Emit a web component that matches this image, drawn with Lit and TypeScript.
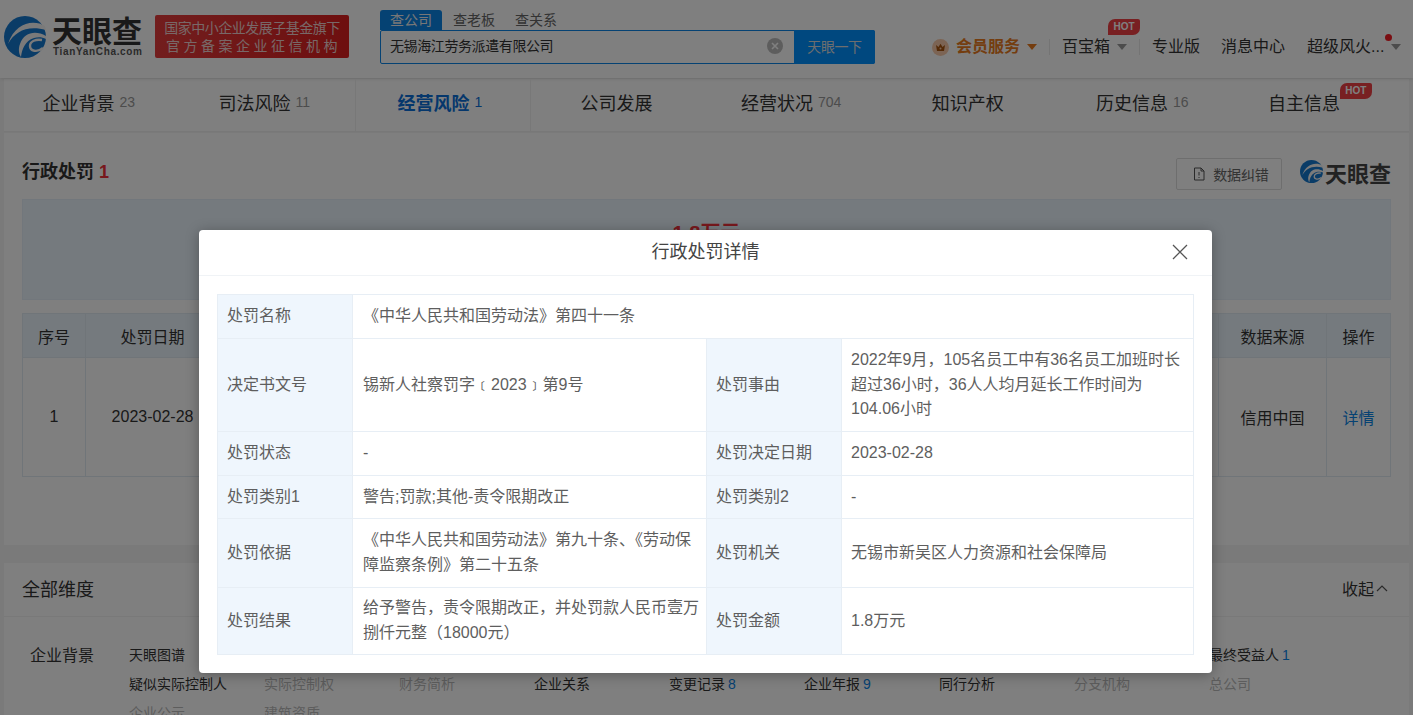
import { LitElement, html, css, svg } from 'lit'
import { customElement } from 'lit/decorators.js'

const logoMark = svg`
  <circle cx="21" cy="21" r="21" fill="#1478cf"></circle>
  <path d="M41 10C30 3 11 6 4 28C11 15 24 9 42 14Z" fill="#f4f4f4"></path>
  <path d="M42 20C32 14 20 16 16 28C14 33 15 38 17 41C18 33 21 25 30 22C34 21 38 21 42 23Z" fill="#f4f4f4"></path>
  <path d="M38 24C32 23 26 25 26 30C26 35 33 37 39 32" fill="none" stroke="#f4f4f4" stroke-width="2.4"></path>
`

const arrow = (color: string) => html`<span class="arrow" style="border-top-color:${color}"></span>`

interface Tab { label: string; count?: string; active?: boolean; hot?: boolean }
const tabs: Tab[] = [
  { label: '企业背景', count: '23' },
  { label: '司法风险', count: '11' },
  { label: '经营风险', count: '1', active: true },
  { label: '公司发展' },
  { label: '经营状况', count: '704' },
  { label: '知识产权' },
  { label: '历史信息', count: '16' },
  { label: '自主信息', hot: true },
]

interface Dim { label?: string; count?: string; off?: boolean }
const dims: Dim[] = [
  { label: '天眼图谱' }, {}, {}, {}, {}, {}, {}, {}, { label: '最终受益人', count: '1' },
  { label: '疑似实际控制人' }, { label: '实际控制权', off: true }, { label: '财务简析', off: true },
  { label: '企业关系' }, { label: '变更记录', count: '8' }, { label: '企业年报', count: '9' },
  { label: '同行分析' }, { label: '分支机构', off: true }, { label: '总公司', off: true },
  { label: '企业公示', off: true }, { label: '建筑资质', off: true },
]

@customElement('app-root')
export class AppRoot extends LitElement {
  static styles = css`
    :host {
      display: block;
      position: relative;
      height: 715px;
      overflow: hidden;
      background: #f5f5f5;
      color: #333;
      font-family: "Liberation Sans", "Noto Sans CJK SC", sans-serif;
      font-size: 14px;
    }

    .header {
      display: flex;
      align-items: flex-start;
      height: 78px;
      box-sizing: border-box;
      padding: 16px 0 0 4px;
      background: #fff;
      box-shadow: 0 1px 4px rgba(0, 0, 0, 0.12);
      position: relative;
    }
    .logo { display: flex; gap: 6px; width: 151px; flex: none; }
    .logo-text { display: flex; flex-direction: column; padding-top: 3px; }
    .logo-cn { font-size: 30px; line-height: 26px; font-weight: 700; color: #333; }
    .logo-en { font-size: 10px; line-height: 10px; margin: 2px 0 0 1px; font-weight: 700; letter-spacing: 0.66px; color: #555; }
    .banner {
      width: 194px;
      height: 43px;
      margin-top: -1px;
      flex: none;
      box-sizing: border-box;
      border-radius: 2px;
      background: linear-gradient(90deg, #e43c3c, #dc1e1e);
      color: #f0d0d0;
      text-align: center;
      font-size: 14px;
      line-height: 18px;
      padding-top: 4px;
    }
    .banner div:first-child { letter-spacing: -0.5px; }
    .banner div:last-child { letter-spacing: 3.5px; padding-left: 3px; }

    .search { width: 495px; margin: -6px 0 0 31px; flex: none; }
    .search-tabs { display: flex; height: 20px; line-height: 20px; font-size: 14px; color: #666; }
    .search-tabs span { margin-right: 20px; }
    .search-tabs .on {
      width: 62px;
      margin-right: 11px;
      background: #0a84e6;
      color: #eee;
      text-align: center;
      border-radius: 3px 3px 0 0;
    }
    .search-box {
      display: flex;
      height: 34px;
      box-sizing: border-box;
      border: 1px solid #0a84e6;
      border-radius: 2px;
      position: relative;
      background: #fff;
    }
    .search-input { flex: 1; padding-left: 9px; line-height: 31px; color: #333; letter-spacing: -0.4px; }
    .clear {
      width: 16px;
      height: 16px;
      margin: 7px 11px 0 0;
      border-radius: 50%;
      background: #bbb;
    }
    .clear svg { display: block; }
    .search-btn {
      width: 81px;
      margin: -1px -1px -1px 0;
      background: #0090ff;
      color: #ddd;
      text-align: center;
      line-height: 34px;
      border-radius: 0 2px 2px 0;
      letter-spacing: -0.4px;
    }

    .nav { display: flex; align-items: center; margin: 15px 0 0 57px; font-size: 16px; line-height: 32px; color: #333; }
    .vip { display: flex; align-items: center; color: #e87b1e; font-weight: 700; }
    .crown { margin-right: 7px; }
    .arrow {
      display: inline-block;
      width: 0;
      height: 0;
      margin-left: 7px;
      border: 5px solid transparent;
      border-bottom: 0;
      border-top: 6px solid #999;
    }
    .sep { width: 1px; height: 16px; background: #e8e8e8; margin: 0 12px; }
    .nav-item { position: relative; display: flex; align-items: center; }
    .hot {
      position: absolute;
      width: 32px;
      height: 16px;
      background: #f04044;
      color: #fff;
      font-size: 10px;
      line-height: 16px;
      font-weight: 700;
      text-align: center;
      border-radius: 7px 2px 7px 0;
    }
    .nav-item .hot { left: 46px; top: -12px; }
    .dot { position: absolute; right: 9px; top: 3px; width: 7px; height: 7px; border-radius: 50%; background: #f51d24; }
    .ml-msg { margin-left: 21px; }
    .ml-user { margin-left: 22px; }

    .tabs {
      display: grid;
      grid-template-columns: repeat(8, 175.6px);
      height: 53px;
      margin: 1px 4px 0;
      background: #fff;
      border-bottom: 1px solid #f0f0f0;
      box-sizing: border-box;
    }
    .tab {
      display: flex;
      justify-content: center;
      align-items: center;
      gap: 5px;
      font-size: 18px;
      color: #333;
      position: relative;
      padding: 0 4px 6px 0;
      box-sizing: border-box;
    }
    .tab.counted { padding-right: 6px; }
    .tab.flagged { padding-right: 34px; }
    .tab.active { color: #0a6fd8; font-weight: 700; border-left: 1px solid #f0f0f0; border-right: 1px solid #f0f0f0; }
    .tab small { font-size: 14px; font-weight: 400; color: #999; }
    .tab.active small { color: #0a6fd8; }
    .tab .hot { right: 37px; top: 4px; left: auto; }

    .card { margin: 1px 4px 0; background: #fff; height: 412px; box-sizing: border-box; padding: 0 18px; }
    .title-row { display: flex; align-items: center; height: 66px; padding-top: 16px; box-sizing: border-box; }
    .title { font-size: 18px; font-weight: 700; color: #333; padding-bottom: 9px; }
    .title em { font-style: normal; color: #f0303a; }
    .fix {
      display: flex;
      align-items: center;
      gap: 7px;
      justify-content: center;
      margin-left: auto;
      width: 106px;
      height: 32px;
      box-sizing: border-box;
      border: 1px solid #ddd;
      border-radius: 2px;
      color: #666;
      padding-left: 3px;
      letter-spacing: -0.1px;
    }
    .mini-logo { display: flex; align-items: center; gap: 2px; margin: 0 0 5px 18px; font-size: 22px; font-weight: 700; color: #444; }

    .summary {
      height: 101px;
      background: #ebf5fc;
      border: 1px solid #e4eff8;
      box-sizing: border-box;
      text-align: center;
      color: #f0303a;
      font-size: 20px;
      font-weight: 700;
      line-height: 26px;
      padding-top: 20px;
    }

    .records { width: 100%; border-collapse: collapse; margin-top: 13px; table-layout: fixed; font-size: 16px; }
    .records th, .records td { border: 1px solid #e1eaf2; text-align: center; font-weight: 400; color: #333; padding: 0; }
    .records th { height: 43px; background: #ebf5fc; }
    .records td { height: 118px; }
    .records a { color: #0a84e6; }

    .dims { margin: 18px 4px 0; background: #fff; height: 200px; }
    .dims-head {
      display: flex;
      align-items: center;
      justify-content: space-between;
      height: 54px;
      padding: 0 21px 4px 18px;
      border-bottom: 1px solid #f2f2f2;
      box-sizing: border-box;
      font-size: 18px;
      color: #333;
    }
    .fold { display: flex; align-items: center; gap: 2px; font-size: 16px; }
    .dims-body { display: flex; padding-top: 24px; }
    .dims-label { width: 125px; flex: none; padding-left: 26px; box-sizing: border-box; font-size: 16px; line-height: 29px; }
    .dims-grid { display: grid; grid-template-columns: repeat(9, 135px); grid-auto-rows: 29px; line-height: 29px; color: #333; }
    .dims-grid .off { color: #bbb; }
    .dims-grid em { font-style: normal; color: #0a84e6; margin-left: 3px; }

    .mask { position: absolute; inset: 0; background: rgba(0, 0, 0, 0.5); }
    .modal {
      position: absolute;
      left: 199px;
      top: 230px;
      width: 1013px;
      height: 443px;
      background: #fff;
      border-radius: 4px;
      box-shadow: 0 2px 14px rgba(0, 0, 0, 0.3);
    }
    .modal-head {
      height: 46px;
      border-bottom: 1px solid #f0f3f6;
      box-sizing: border-box;
      text-align: center;
      font-size: 18px;
      line-height: 44px;
      color: #444;
      position: relative;
    }
    .close { position: absolute; right: 24px; top: 14px; display: block; }
    .detail { width: 976px; margin: 18px 0 0 18px; border-collapse: collapse; table-layout: fixed; color: #5e5e5e; font-size: 16px; }
    .detail td { border: 1px solid #e7eef5; padding: 9.25px 6px 9.25px 9px; line-height: 24.5px; vertical-align: middle; box-sizing: border-box; }
    .detail tr.tight td { padding-top: 8.75px; padding-bottom: 8.75px; }
    .detail td.k { background: #eff6fd; }
    .detail td.v { padding-left: 10px; }
    .nowrap { white-space: nowrap; }
  `

  render() {
    return html`
      <div class="header">
        <div class="logo">
          <svg width="42" height="42" viewBox="0 0 42 42">${logoMark}</svg>
          <div class="logo-text">
            <div class="logo-cn">天眼查</div>
            <div class="logo-en">TianYanCha.com</div>
          </div>
        </div>
        <div class="banner">
          <div>国家中小企业发展子基金旗下</div>
          <div>官方备案企业征信机构</div>
        </div>
        <div class="search">
          <div class="search-tabs">
            <span class="on">查公司</span><span>查老板</span><span>查关系</span>
          </div>
          <div class="search-box">
            <div class="search-input">无锡海江劳务派遣有限公司</div>
            <div class="clear">
              <svg width="16" height="16" viewBox="0 0 16 16"><path d="M5 5L11 11M11 5L5 11" stroke="#fff" stroke-width="1.6" fill="none"></path></svg>
            </div>
            <div class="search-btn">天眼一下</div>
          </div>
        </div>
        <div class="nav">
          <div class="vip">
            <svg class="crown" width="17" height="17" viewBox="0 0 17 17">
              <circle cx="8.5" cy="8.5" r="8.5" fill="#f8c9a8"></circle>
              <path d="M4 6L6.5 8L8.5 4.8L10.5 8L13 6L12 12H5Z" fill="#a8540f"></path>
              <circle cx="8.5" cy="9.6" r="1" fill="#f8c9a8"></circle>
            </svg>
            会员服务${arrow('#e87b1e')}
          </div>
          <span class="sep"></span>
          <div class="nav-item">百宝箱${arrow('#999')}<span class="hot">HOT</span></div>
          <span class="sep"></span>
          <div class="nav-item">专业版</div>
          <div class="nav-item ml-msg">消息中心</div>
          <div class="nav-item ml-user">超级风火...${arrow('#999')}<span class="dot"></span></div>
        </div>
      </div>

      <div class="tabs">
        ${tabs.map(
          (t) => html`<div class="tab ${t.active ? 'active' : ''} ${t.count ? 'counted' : ''} ${t.hot ? 'flagged' : ''}">
            ${t.label}${t.count ? html`<small>${t.count}</small>` : ''}
            ${t.hot ? html`<span class="hot">HOT</span>` : ''}
          </div>`
        )}
      </div>

      <div class="card">
        <div class="title-row">
          <div class="title">行政处罚 <em>1</em></div>
          <div class="fix">
            <svg width="14" height="14" viewBox="0 0 14 14" fill="none" stroke="#555" stroke-width="1">
              <path d="M2.5 1H9L12 4V13H2.5Z"></path>
              <path d="M9 1V4H12"></path>
              <path d="M7 5V8.5M7 10V11"></path>
            </svg>
            数据纠错
          </div>
          <div class="mini-logo">
            <svg width="23" height="23" viewBox="0 0 42 42">${logoMark}</svg>
            天眼查
          </div>
        </div>
        <div class="summary">1.8万元</div>
        <table class="records">
          <colgroup>
            <col style="width:63px" /><col style="width:134px" /><col /><col style="width:108px" /><col style="width:64px" />
          </colgroup>
          <tr><th>序号</th><th>处罚日期</th><th></th><th>数据来源</th><th>操作</th></tr>
          <tr><td>1</td><td>2023-02-28</td><td></td><td>信用中国</td><td><a>详情</a></td></tr>
        </table>
      </div>

      <div class="dims">
        <div class="dims-head">
          <span>全部维度</span>
          <span class="fold">收起
            <svg width="12" height="8" viewBox="0 0 12 8" fill="none" stroke="#555" stroke-width="1.2"><path d="M1 7L6 2L11 7"></path></svg>
          </span>
        </div>
        <div class="dims-body">
          <div class="dims-label">企业背景</div>
          <div class="dims-grid">
            ${dims.map(
              (d) => html`<div class="${d.off ? 'off' : ''}">${d.label ?? ''}${d.count ? html`<em>${d.count}</em>` : ''}</div>`
            )}
          </div>
        </div>
      </div>

      <div class="mask"></div>

      <div class="modal">
        <div class="modal-head">
          行政处罚详情
          <svg class="close" width="16" height="16" viewBox="0 0 16 16" fill="none" stroke="#555" stroke-width="1.3"><path d="M1 1L15 15M15 1L1 15"></path></svg>
        </div>
        <table class="detail">
          <colgroup>
            <col style="width:135px" /><col style="width:354px" /><col style="width:135px" /><col style="width:352px" />
          </colgroup>
          <tr><td class="k">处罚名称</td><td class="v" colspan="3">《中华人民共和国劳动法》第四十一条</td></tr>
          <tr>
            <td class="k">决定书文号</td><td class="v">锡新人社察罚字﹝2023﹞第9号</td>
            <td class="k">处罚事由</td><td>2022年9月，105名员工中有36名员工加班时长超过36小时，36人人均月延长工作时间为<span class="nowrap">104.06小时</span></td>
          </tr>
          <tr><td class="k">处罚状态</td><td class="v">-</td><td class="k">处罚决定日期</td><td>2023-02-28</td></tr>
          <tr class="tight"><td class="k">处罚类别1</td><td class="v">警告;罚款;其他-责令限期改正</td><td class="k">处罚类别2</td><td>-</td></tr>
          <tr>
            <td class="k">处罚依据</td><td class="v">《中华人民共和国劳动法》第九十条、《劳动保障监察条例》第二十五条</td>
            <td class="k">处罚机关</td><td>无锡市新吴区人力资源和社会保障局</td>
          </tr>
          <tr class="tight">
            <td class="k">处罚结果</td><td class="v">给予警告，责令限期改正，并处罚款人民币壹万捌仟元整（18000元）</td>
            <td class="k">处罚金额</td><td>1.8万元</td>
          </tr>
        </table>
      </div>
    `
  }
}
